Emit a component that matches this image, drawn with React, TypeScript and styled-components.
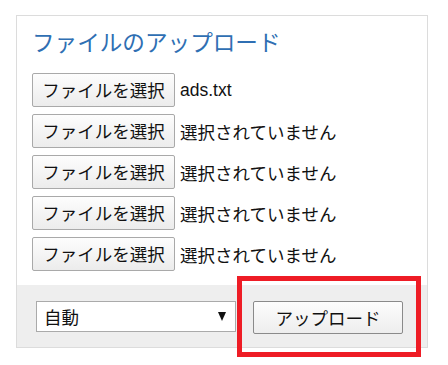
import React from "react";
import styled, { createGlobalStyle } from "styled-components";

const Global = createGlobalStyle`
  html, body { margin: 0; padding: 0; background: #fff; }
  body { font-family: "Liberation Sans", "Noto Sans CJK JP", sans-serif; color: #111; }
  #root { min-height: 365px; padding-bottom: 1px; box-sizing: border-box; }
`;

const Panel = styled.div`
  margin: 15px 0 0 16px;
  width: 410px;
  border: 1px solid #dcdcdc;
  background: #fff;
`;

const Body = styled.div`
  padding: 10px 15px 14px 15px;
  display: flex;
  flex-direction: column;
`;

const Title = styled.h2`
  margin: 0 0 16px 0;
  font-family: "Noto Sans CJK JP", sans-serif;
  font-weight: 400;
  font-size: 22.6px;
  line-height: 31px;
  color: #2f6fb3;
`;

const Rows = styled.div`
  display: flex;
  flex-direction: column;
  gap: 7px;
`;

const Row = styled.div`
  display: flex;
  align-items: center;
  gap: 5px;
  height: 34px;
`;

const FileButton = styled.button`
  box-sizing: border-box;
  height: 34px;
  width: 143px;
  padding: 0;
  border: 1px solid #a9a9a9;
  border-radius: 2px;
  background: linear-gradient(#fdfdfd, #ececec);
  font-family: "Noto Sans CJK JP", sans-serif;
  font-size: 17.5px;
  color: #111;
  line-height: 1;
`;

const FileName = styled.span`
  font-size: 17.5px;
  color: #111;
  font-family: "Liberation Sans", "Noto Sans CJK JP", sans-serif;
`;

const Footer = styled.div`
  background: #eeeeee;
  height: 62px;
  box-sizing: border-box;
  padding: 16px 0 0 19px;
  display: flex;
  align-items: flex-start;
  gap: 17px;
`;

const SelectWrap = styled.div`
  position: relative;
  display: flex;
  width: 200px;
  height: 31px;
`;

const Select = styled.select`
  box-sizing: border-box;
  appearance: none;
  width: 100%;
  height: 100%;
  border: 1px solid #aaaaaa;
  border-radius: 0;
  background: #fff;
  padding: 0 0 0 7px;
  font-family: "Noto Sans CJK JP", sans-serif;
  font-size: 17.5px;
  color: #111;
`;

const Arrow = styled.span`
  position: absolute;
  right: 10px;
  top: 11px;
  width: 0;
  height: 0;
  border-left: 4px solid transparent;
  border-right: 4px solid transparent;
  border-top: 9px solid #111;
  pointer-events: none;
`;

const UploadWrap = styled.div`
  position: relative;
  display: flex;
  height: 33px;
`;

const UploadButton = styled.button`
  box-sizing: border-box;
  width: 150px;
  height: 33px;
  border: 1px solid #8a8a8a;
  border-radius: 2px;
  background: linear-gradient(#fdfdfd, #ededed);
  font-family: "Noto Sans CJK JP", sans-serif;
  font-size: 17.5px;
  color: #111;
  padding: 0;
`;

const Highlight = styled.div`
  position: absolute;
  box-sizing: border-box;
  left: -16px;
  top: -25px;
  width: 184px;
  height: 81px;
  border: 5px solid #ee1c25;
  pointer-events: none;
`;

const files = ["ads.txt", "選択されていません", "選択されていません", "選択されていません", "選択されていません"];

export default function App() {
  return (
    <>
      <Global />
      <Panel>
        <Body>
          <Title>ファイルのアップロード</Title>
          <Rows>
            {files.map((f, i) => (
              <Row key={i}>
                <FileButton type="button">ファイルを選択</FileButton>
                <FileName>{f}</FileName>
              </Row>
            ))}
          </Rows>
        </Body>
        <Footer>
          <SelectWrap>
            <Select defaultValue="auto">
              <option value="auto">自動</option>
            </Select>
            <Arrow />
          </SelectWrap>
          <UploadWrap>
            <UploadButton type="button">アップロード</UploadButton>
            <Highlight />
          </UploadWrap>
        </Footer>
      </Panel>
    </>
  );
}
